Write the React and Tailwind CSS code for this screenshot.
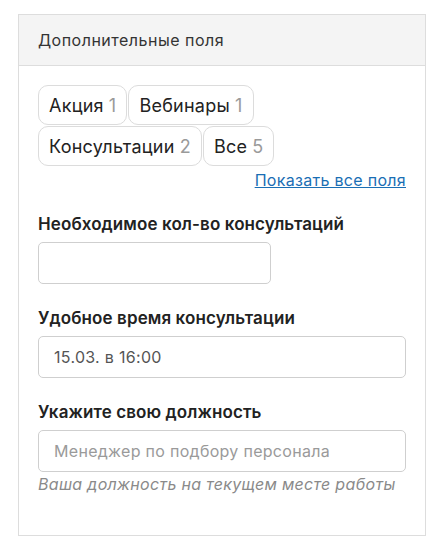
const chips = [
  { name: 'Акция', count: 1 },
  { name: 'Вебинары', count: 1 },
  { name: 'Консультации', count: 2 },
  { name: 'Все', count: 5 },
];

const inputCls =
  'h-[42px] border border-[#cfcfcf] rounded-[5px] px-[15px] text-[16px] tracking-[0.3px] text-[#555] placeholder:text-[#9a9a9a] outline-none';

const Field = ({ label, className = '', children }) => (
  <div className={className}>
    <div className="text-[17px] leading-[24px] font-semibold tracking-[0.1px] text-[#222]">{label}</div>
    <div className="mt-[6px]">{children}</div>
  </div>
);

export default function App() {
  return (
    <div className="pl-[18px] pt-[14px] font-['Inter',sans-serif] bg-white min-h-[549px]">
      <div className="w-[408px] h-[522px] border border-[#dddddd] bg-white">
        {/* Header */}
        <div className="h-[51px] bg-[#f4f4f4] border-b border-[#dddddd] px-[19px] flex items-center text-[16px] tracking-[0.5px] text-[#333]">
          Дополнительные поля
        </div>

        <div className="px-[19px] pt-[19px]">
          {/* Tag chips */}
          <div className="flex flex-wrap gap-px w-[250px]">
            {chips.map((c) => (
              <button
                key={c.name}
                className="h-10 px-[10px] border border-[#dcdcdc] rounded-[10px] text-[18px] tracking-[0.25px] text-[#222] flex items-center gap-[5px] bg-white"
              >
                {c.name}
                <span className="text-[#9a9a9a]">{c.count}</span>
              </button>
            ))}
          </div>

          <div className="mt-[3px] text-right text-[16px] tracking-[0.3px] leading-[22px]">
            <a href="#" className="text-[#1a6eb4] underline">Показать все поля</a>
          </div>

          <Field label="Необходимое кол-во консультаций" className="mt-[21px]">
            <input className={`w-[233px] ${inputCls}`} />
          </Field>

          <Field label="Удобное время консультации" className="mt-[22px]">
            <input readOnly value="15.03. в 16:00" className={`w-full ${inputCls}`} />
          </Field>

          <Field label="Укажите свою должность" className="mt-[22px]">
            <input placeholder="Менеджер по подбору персонала" className={`w-full ${inputCls}`} />
            <div className="text-[16px] leading-[24px] italic tracking-[0.3px] text-[#8a8a8a]">
              Ваша должность на текущем месте работы
            </div>
          </Field>
        </div>
      </div>
    </div>
  );
}
